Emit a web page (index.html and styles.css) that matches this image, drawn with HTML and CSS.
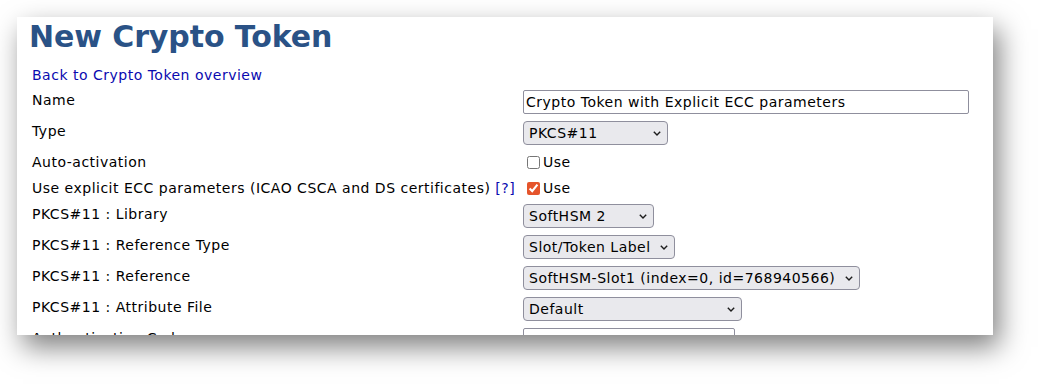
FILE: index.html
```html
<!DOCTYPE html>
<html>
  <head>
    <title>New Crypto Token</title>
    <meta name="viewport" content="width=device-width, initial-scale=1" />
    <link rel="stylesheet" href="styles.css">
  </head>
  <body>
    <div class="panel">
      <h1 class="title">New Crypto Token</h1>
      <a class="back-link" href="#">Back to Crypto Token overview</a>

      <form class="token-form" autocomplete="off">
        <div class="row">
          <label class="row-label" for="name">Name</label>
          <div class="row-control">
            <input type="text" id="name" class="text-input name-input" value="Crypto Token with Explicit ECC parameters" />
          </div>
        </div>

        <div class="row">
          <label class="row-label" for="type">Type</label>
          <div class="row-control">
            <span class="select-wrap select-type">
              <select id="type"><option>PKCS#11</option><option>Soft</option></select>
              <svg class="chevron" width="8" height="5" viewBox="0 0 8 5"><polyline points="0.8,0.8 4,4 7.2,0.8" /></svg>
            </span>
          </div>
        </div>

        <div class="row row-check">
          <span class="row-label">Auto-activation</span>
          <div class="row-control">
            <label class="check"><input type="checkbox" />Use</label>
          </div>
        </div>

        <div class="row row-check">
          <span class="row-label">Use explicit ECC parameters (ICAO CSCA and DS certificates) <a href="#" class="help">[?]</a></span>
          <div class="row-control">
            <label class="check"><input type="checkbox" checked />Use</label>
          </div>
        </div>

        <div class="row">
          <label class="row-label" for="library">PKCS#11 : Library</label>
          <div class="row-control">
            <span class="select-wrap select-library">
              <select id="library"><option>SoftHSM 2</option></select>
              <svg class="chevron" width="8" height="5" viewBox="0 0 8 5"><polyline points="0.8,0.8 4,4 7.2,0.8" /></svg>
            </span>
          </div>
        </div>

        <div class="row">
          <label class="row-label" for="reftype">PKCS#11 : Reference Type</label>
          <div class="row-control">
            <span class="select-wrap select-reftype">
              <select id="reftype"><option>Slot/Token Label</option></select>
              <svg class="chevron" width="8" height="5" viewBox="0 0 8 5"><polyline points="0.8,0.8 4,4 7.2,0.8" /></svg>
            </span>
          </div>
        </div>

        <div class="row">
          <label class="row-label" for="reference">PKCS#11 : Reference</label>
          <div class="row-control">
            <span class="select-wrap select-reference">
              <select id="reference"><option>SoftHSM-Slot1 (index=0, id=768940566)</option></select>
              <svg class="chevron" width="8" height="5" viewBox="0 0 8 5"><polyline points="0.8,0.8 4,4 7.2,0.8" /></svg>
            </span>
          </div>
        </div>

        <div class="row">
          <label class="row-label" for="attrfile">PKCS#11 : Attribute File</label>
          <div class="row-control">
            <span class="select-wrap select-attr">
              <select id="attrfile"><option>Default</option></select>
              <svg class="chevron" width="8" height="5" viewBox="0 0 8 5"><polyline points="0.8,0.8 4,4 7.2,0.8" /></svg>
            </span>
          </div>
        </div>

        <div class="row">
          <label class="row-label" for="authcode">Authentication Code</label>
          <div class="row-control">
            <input type="password" id="authcode" class="text-input auth-input" />
          </div>
        </div>
      </form>
    </div>
  </body>
</html>
```

FILE: styles.css
```css
* {
  padding: 0;
  margin: 0;
  box-sizing: border-box;
}
html,
body {
  min-height: 384px;
}
body {
  padding: 17px 0 0 17px;
  background-color: #ffffff;
  font-family: "DejaVu Sans", Verdana, sans-serif;
  font-size: 14px;
  letter-spacing: 0.5px;
  color: #000000;
}
.panel {
  width: 976px;
  height: 318px;
  padding: 0 15px;
  background-color: #ffffff;
  overflow: hidden;
  box-shadow: 6px 12px 26px rgba(0, 0, 0, 0.5);
}
.title {
  margin: 2px 0 0 -3px;
  font-size: 30px;
  line-height: 35px;
  font-weight: bold;
  letter-spacing: -0.1px;
  color: #2a5286;
}
.back-link {
  display: block;
  margin-top: 13px;
  line-height: 16px;
  color: #0a0ab0;
  text-decoration: none;
}
.token-form {
  margin-top: 4px;
}
.row {
  display: grid;
  grid-template-columns: 491px 1fr;
  align-items: start;
  padding: 3px 0 4px;
}
.row-label {
  padding-top: 2px;
  line-height: 16px;
}
.help {
  color: #0a0ab0;
  text-decoration: none;
}
.row-check {
  padding: 5px 0;
}
.row-check .row-label {
  padding-top: 0;
}
.row-control {
  display: flex;
  align-items: center;
}
.text-input {
  display: block;
  height: 24px;
  padding: 0 2px;
  border: 1px solid #8f8f9d;
  border-radius: 2px;
  font-family: inherit;
  font-size: 14px;
  letter-spacing: 0.5px;
  color: #000000;
  outline: none;
}
.name-input {
  width: 446px;
}
.auth-input {
  width: 212px;
}
.check {
  display: flex;
  align-items: center;
  height: 16px;
  line-height: 16px;
}
.check input {
  width: 13px;
  height: 13px;
  margin: 0 3px 0 4px;
  accent-color: #e5542b;
}
.select-wrap {
  position: relative;
  display: inline-block;
}
.select-wrap select {
  display: block;
  height: 24px;
  padding: 0 20px 0 5px;
  border: 1px solid #8f8f9d;
  border-radius: 4px;
  background-color: #e9e9ed;
  font-family: inherit;
  font-size: 14px;
  letter-spacing: 0.5px;
  color: #000000;
  appearance: none;
  -webkit-appearance: none;
  outline: none;
}
.chevron {
  position: absolute;
  right: 7px;
  top: 10px;
  fill: none;
  stroke: #1c1c1c;
  stroke-width: 1.4;
  pointer-events: none;
}
.select-type select {
  width: 145px;
}
.select-library select {
  width: 131px;
}
.select-reftype select {
  width: 152px;
}
.select-reference select {
  width: 337px;
}
.select-attr select {
  width: 219px;
}
```
